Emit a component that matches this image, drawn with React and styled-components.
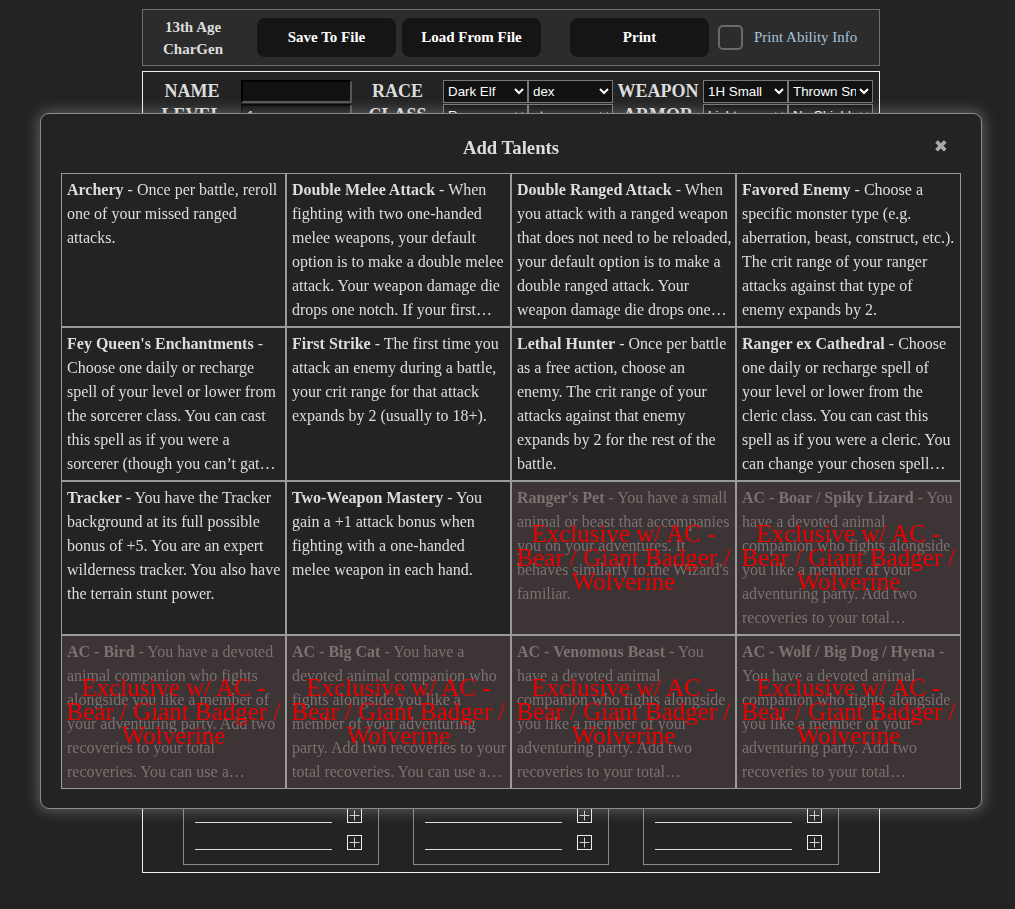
import styled, { createGlobalStyle } from "styled-components";

const GlobalStyle = createGlobalStyle`
  body {
    margin: 0;
    background: #232323;
    color: #ddd;
    font-family: "Liberation Serif", "Times New Roman", serif;
  }
`;

const COMPANION =
  "You have a devoted animal companion who fights alongside you like a member of your adventuring party. Add two recoveries to your total recoveries. You can use a standard action to command your companion to attack.";

const EXCLUSIVE = "Exclusive w/ AC - Bear / Giant Badger / Wolverine";

const talents = [
  { name: "Archery", text: "Once per battle, reroll one of your missed ranged attacks." },
  {
    name: "Double Melee Attack",
    text: "When fighting with two one-handed melee weapons, your default option is to make a double melee attack. Your weapon damage die drops one notch. If your first attack is a natural even roll, you can make a second attack as a free action.",
  },
  {
    name: "Double Ranged Attack",
    text: "When you attack with a ranged weapon that does not need to be reloaded, your default option is to make a double ranged attack. Your weapon damage die drops one notch. If your first attack is a natural even roll, you can make a second attack.",
  },
  {
    name: "Favored Enemy",
    text: "Choose a specific monster type (e.g. aberration, beast, construct, etc.). The crit range of your ranger attacks against that type of enemy expands by 2.",
  },
  {
    name: "Fey Queen's Enchantments",
    text: "Choose one daily or recharge spell of your level or lower from the sorcerer class. You can cast this spell as if you were a sorcerer (though you can\u2019t gather power to cast it).",
  },
  {
    name: "First Strike",
    text: "The first time you attack an enemy during a battle, your crit range for that attack expands by 2 (usually to 18+).",
  },
  {
    name: "Lethal Hunter",
    text: "Once per battle as a free action, choose an enemy. The crit range of your attacks against that enemy expands by 2 for the rest of the battle.",
  },
  {
    name: "Ranger ex Cathedral",
    text: "Choose one daily or recharge spell of your level or lower from the cleric class. You can cast this spell as if you were a cleric. You can change your chosen spell each time you level up.",
  },
  {
    name: "Tracker",
    text: "You have the Tracker background at its full possible bonus of +5. You are an expert wilderness tracker. You also have the terrain stunt power.",
  },
  {
    name: "Two-Weapon Mastery",
    text: "You gain a +1 attack bonus when fighting with a one-handed melee weapon in each hand.",
  },
  {
    name: "Ranger's Pet",
    text: "You have a small animal or beast that accompanies you on your adventures. It behaves similarly to the Wizard's familiar.",
    locked: true,
  },
  { name: "AC - Boar / Spiky Lizard", text: COMPANION, locked: true },
  { name: "AC - Bird", text: COMPANION, locked: true },
  { name: "AC - Big Cat", text: COMPANION, locked: true },
  { name: "AC - Venomous Beast", text: COMPANION, locked: true },
  { name: "AC - Wolf / Big Dog / Hyena", text: COMPANION, locked: true },
];

export default function App() {
  return (
    <>
      <GlobalStyle />
      <Page>
        <Toolbar>
          <Brand>
            13th Age
            <br />
            CharGen
          </Brand>
          <ToolButton $gap={14}>Save To File</ToolButton>
          <ToolButton $gap={6}>Load From File</ToolButton>
          <ToolButton $gap={29}>Print</ToolButton>
          <CheckBox />
          <CheckLabel>Print Ability Info</CheckLabel>
        </Toolbar>

        <Sheet>
          <HeaderGrid>
            <FieldLabel>NAME</FieldLabel>
            <TextInput defaultValue="" />
            <FieldLabel>RACE</FieldLabel>
            <Select defaultValue="Dark Elf">
              <option>Dark Elf</option>
            </Select>
            <Select defaultValue="dex">
              <option>dex</option>
            </Select>
            <FieldLabel>WEAPON</FieldLabel>
            <Select defaultValue="1H Small">
              <option>1H Small</option>
            </Select>
            <Select defaultValue="Thrown Sn">
              <option>Thrown Sn</option>
            </Select>

            <FieldLabel>LEVEL</FieldLabel>
            <TextInput defaultValue="1" />
            <FieldLabel>CLASS</FieldLabel>
            <Select defaultValue="Ranger">
              <option>Ranger</option>
            </Select>
            <Select defaultValue="str">
              <option>str</option>
            </Select>
            <FieldLabel>ARMOR</FieldLabel>
            <Select defaultValue="Light">
              <option>Light</option>
            </Select>
            <Select defaultValue="No Shield">
              <option>No Shield</option>
            </Select>
          </HeaderGrid>

          <SheetBody />

          <ListRow>
            {["Talents", "Feats", "Items"].map((title) => (
              <ListBox key={title}>
                <ListTitle>{title}</ListTitle>
                {[0, 1, 2, 3, 4, 5].map((i) => (
                  <ListLine key={i}>
                    <Underline />
                    <PlusButton>
                      <svg width="13" height="13" viewBox="0 0 13 13">
                        <path d="M6.5 1.5v10M1.5 6.5h10" stroke="#cfcfcf" strokeWidth="1" />
                      </svg>
                    </PlusButton>
                  </ListLine>
                ))}
              </ListBox>
            ))}
          </ListRow>
        </Sheet>
      </Page>

      <Modal>
        <ModalHeader>
          <span />
          <ModalTitle>Add Talents</ModalTitle>
          <CloseButton>✖</CloseButton>
        </ModalHeader>
        <TalentGrid>
          {talents.map((t) => (
            <TalentCell key={t.name} $locked={t.locked}>
              <TalentText>
                <b>{t.name}</b> - {t.text}
              </TalentText>
              {t.locked && <LockNote>{EXCLUSIVE}</LockNote>}
            </TalentCell>
          ))}
        </TalentGrid>
      </Modal>
    </>
  );
}

const Page = styled.div`
  width: 738px;
  margin-left: 142px;
  padding-top: 9px;
`;

const Toolbar = styled.div`
  box-sizing: border-box;
  height: 57px;
  display: flex;
  align-items: center;
  border: 1px solid #6e6e6e;
  background: #2c2c2c;
`;

const Brand = styled.div`
  width: 100px;
  text-align: center;
  font-weight: bold;
  font-size: 15px;
  line-height: 22px;
  color: #ddd;
`;

const ToolButton = styled.button`
  margin-left: ${(p) => p.$gap}px;
  width: 139px;
  height: 39px;
  border: none;
  border-radius: 8px;
  background: #151515;
  color: #fff;
  font-family: "Liberation Serif", serif;
  font-weight: bold;
  font-size: 15px;
`;

const CheckBox = styled.span`
  box-sizing: border-box;
  margin-left: 9px;
  width: 25px;
  height: 25px;
  border: 2px solid #6a6a6a;
  border-radius: 5px;
`;

const CheckLabel = styled.span`
  margin-left: 11px;
  font-size: 15px;
  color: #a4c3de;
`;

const Sheet = styled.div`
  margin-top: 5px;
  border: 1px solid #eee;
  padding: 7px 0 7px 0;
`;

const HeaderGrid = styled.div`
  display: grid;
  grid-template-columns: 98px 111px 91px 85px 85px 90px 85px 85px;
  grid-auto-rows: 24px;
  align-items: center;
`;

const FieldLabel = styled.div`
  text-align: center;
  font-weight: bold;
  font-size: 18px;
  color: #ddd;
`;

const TextInput = styled.input`
  box-sizing: border-box;
  width: 100%;
  height: 23px;
  background: #111;
  border: 2px inset #555;
  color: #ddd;
  padding: 0 4px;
`;

const Select = styled.select`
  box-sizing: border-box;
  width: 100%;
  height: 23px;
  background: #111;
  color: #fff;
  color-scheme: dark;
  border: 1px solid #777;
  border-radius: 0;
  font-family: "Liberation Sans", Arial, sans-serif;
  font-size: 13.33px;
`;

const SheetBody = styled.div`
  height: 530px;
`;

const ListRow = styled.div`
  display: flex;
  justify-content: center;
  gap: 34px;
`;

const ListBox = styled.div`
  width: 196px;
  box-sizing: border-box;
  border: 1px solid #888;
  padding: 0 16px 14px 11px;
`;

const ListTitle = styled.div`
  height: 30px;
  line-height: 30px;
  text-align: center;
  font-weight: bold;
`;

const ListLine = styled.div`
  height: 27px;
  display: flex;
  align-items: flex-end;
  gap: 15px;
`;

const Underline = styled.div`
  width: 138px;
  border-bottom: 1px solid #ddd;
`;

const PlusButton = styled.div`
  width: 15px;
  height: 15px;
  box-sizing: border-box;
  border: 1px solid #eee;
  display: flex;
  align-items: center;
  justify-content: center;
`;

const Modal = styled.div`
  position: fixed;
  top: 113px;
  left: 40px;
  width: 942px;
  height: 696px;
  box-sizing: border-box;
  background: #232323;
  border: 1px solid #8a8a8a;
  border-radius: 9px;
  box-shadow: 0 0 14px 2px rgba(200, 200, 200, 0.35);
  padding: 0 20px;
`;

const ModalHeader = styled.div`
  height: 59px;
  display: grid;
  grid-template-columns: 1fr auto 1fr;
  align-items: start;
`;

const ModalTitle = styled.h3`
  margin: 23px 0 0;
  font-size: 18.72px;
  line-height: 22px;
  color: #ddd;
`;

const CloseButton = styled.span`
  justify-self: end;
  margin: 22px 13px 0 0;
  font-family: "DejaVu Sans", sans-serif;
  font-size: 17px;
  color: #aaa;
`;

const TalentGrid = styled.div`
  display: grid;
  grid-template-columns: repeat(4, 225px);
  grid-auto-rows: 154px;
`;

const TalentCell = styled.div`
  position: relative;
  box-sizing: border-box;
  border: 1px solid #9a9a9a;
  padding: 4px 3.3px 4px 5px;
  background: ${(p) => (p.$locked ? "#3d3535" : "#232323")};
  color: ${(p) => (p.$locked ? "#7a7272" : "#ddd")};
`;

const TalentText = styled.div`
  font-size: 16px;
  line-height: 24px;
  display: -webkit-box;
  -webkit-line-clamp: 6;
  -webkit-box-orient: vertical;
  overflow: hidden;
`;

const LockNote = styled.div`
  position: absolute;
  inset: 0;
  display: flex;
  align-items: center;
  justify-content: center;
  text-align: center;
  padding: 0 3px;
  color: #e00;
  font-size: 25px;
  line-height: 24px;
`;
